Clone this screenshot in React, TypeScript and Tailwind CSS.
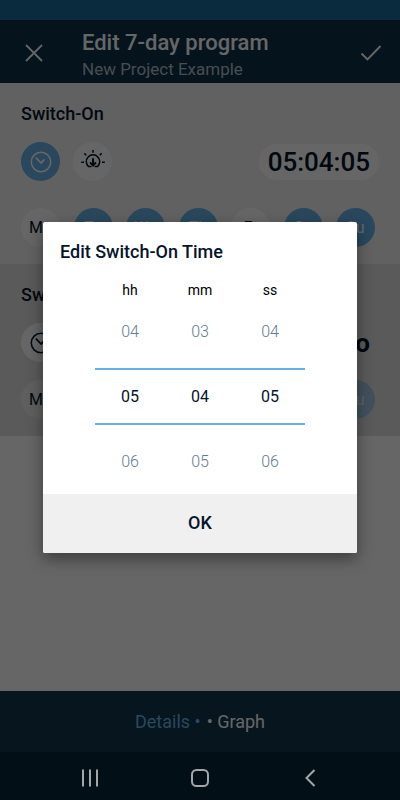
import { useState } from 'react'
import clsx from 'clsx'

const days = ['Mo', 'Tu', 'We', 'Th', 'Fr', 'Sa', 'Su']

const units = [
    { label: 'hh', name: 'Hours', max: 24 },
    { label: 'mm', name: 'Minutes', max: 60 },
    { label: 'ss', name: 'Seconds', max: 60 },
]

const pad = (value: number) => String(value).padStart(2, '0')

function ClockIcon() {
    return (
        <svg viewBox="0 0 22 22" className="size-[22px]" fill="none" stroke="currentColor" strokeWidth="1.5" strokeLinecap="round" strokeLinejoin="round">
            <circle cx="11" cy="11" r="9.7" />
            <path d="M6.4 7.2 11 12 14 8.9" strokeWidth="1.8" />
        </svg>
    )
}

function SunsetIcon() {
    return (
        <svg viewBox="0 0 24 24" className="size-6" fill="none" stroke="currentColor" strokeWidth="1.5">
            <path d="M10.4 16.6H7.6A6.7 6.7 0 1 1 16.4 16.6H13.6" />
            <path d="M12 8.2v7" strokeWidth="2" />
            <path d="m9 12.4 3 3.2 3-3.2" strokeWidth="1.8" />
            <path d="M12 0v2.8M.2 12.3h2.8M21 12.3h2.8M3.4 3.4l1.8 1.8M20.6 3.4l-1.8 1.8" />
        </svg>
    )
}

function ModeButtons({ active }: { active?: string }) {
    return (
        <div className="flex gap-[13px]">
            <button
                aria-label="Fixed time"
                className={clsx('flex size-[39px] items-center justify-center rounded-full', active === 'time' ? 'bg-[#66b5e8] text-white' : 'bg-white')}
            >
                <ClockIcon />
            </button>
            <button aria-label="Sunset" className="flex size-[39px] items-center justify-center rounded-full bg-white">
                <SunsetIcon />
            </button>
        </div>
    )
}

function DayRow({ selected, faded }: { selected: string[]; faded?: boolean }) {
    return (
        <div className="flex justify-between pr-1">
            {days.map((day) => (
                <button
                    key={day}
                    disabled={faded}
                    aria-pressed={selected.includes(day)}
                    className={clsx(
                        'size-[39px] rounded-full text-base',
                        selected.includes(day) ? 'bg-[#66b5e8] text-white' : faded ? 'bg-white/40' : 'bg-white',
                        faded && selected.includes(day) && 'opacity-50',
                    )}
                >
                    {day}
                </button>
            ))}
        </div>
    )
}

export default function App() {
    const [time, setTime] = useState([5, 4, 5])
    const [open, setOpen] = useState(true)
    const selectedDays = ['Tu', 'We', 'Th', 'Sa', 'Su']

    const setUnit = (index: number, value: number) => {
        const max = units[index].max
        setTime(time.map((v, i) => (i === index ? (value + max) % max : v)))
    }

    return (
        <div className="relative flex min-h-screen flex-col bg-white font-[Roboto,sans-serif] text-[#04142b]">
            <div className="h-5 bg-[#196998]" />

            <header className="flex h-[63px] items-center bg-[#0a3046] pt-0.5 pr-[18px] pl-[25px] text-white">
                <button aria-label="Close">
                    <svg viewBox="0 0 18 18" className="size-[18px]" fill="none" stroke="currentColor" strokeWidth="1.8">
                        <path d="m1 1 16 16M17 1 1 17" />
                    </svg>
                </button>
                <div className="ml-[39px] flex-1 pt-1">
                    <h1 className="text-[22px] leading-7 font-medium">Edit 7-day program</h1>
                    <p className="text-[17px] leading-6 text-white/70">New Project Example</p>
                </div>
                <button aria-label="Save">
                    <svg viewBox="0 0 22 18" className="h-[18px] w-[22px]" fill="none" stroke="currentColor" strokeWidth="1.9">
                        <path d="m1.5 9.5 6 6L20.5 2" />
                    </svg>
                </button>
            </header>

            <main className="flex-1">
                <section className="bg-[#f3f3f3] px-[21px] pt-[19px] pb-[17px]">
                    <h2 className="text-lg leading-6 font-medium">Switch-On</h2>
                    <div className="mt-4 mb-[27px] flex items-center justify-between">
                        <ModeButtons active="time" />
                        <button onClick={() => setOpen(true)} className="h-9 rounded-full bg-white px-[9px] text-[26px] leading-9 font-medium">
                            {time.map(pad).join(':')}
                        </button>
                    </div>
                    <DayRow selected={selectedDays} />
                </section>

                <section className="bg-[#e2e2e2] px-[21px] pt-[19px] pb-[17px]">
                    <h2 className="text-lg leading-6 font-medium">Switch-Off</h2>
                    <div className="mt-4 mb-[18px] flex items-center justify-between">
                        <ModeButtons />
                        <span className="pr-[9px] text-[26px] leading-9 font-bold">Auto</span>
                    </div>
                    <DayRow selected={selectedDays} faded />
                </section>
            </main>

            <footer className="flex h-[61px] items-center justify-center gap-1.5 bg-[#0f354b] text-lg text-white">
                <a href="#details" className="text-[#66b5e8]">Details •</a>
                <a href="#graph">• Graph</a>
            </footer>

            {/* Dimmed backdrop with the time picker */}
            {open && (
                <div className="absolute inset-0 flex items-center bg-black/60 px-[43px] pt-[22px] pb-12">
                    <div role="dialog" aria-labelledby="picker-title" className="flex-1 overflow-hidden rounded-xs bg-white shadow-[0_6px_16px_rgba(0,0,0,0.4)]">
                        <h2 id="picker-title" className="px-[17px] pt-[18px] text-lg leading-6 font-medium">
                            Edit Switch-On Time
                        </h2>
                        <div className="px-[52px] pt-4 pb-5 text-base">
                            <div className="grid grid-cols-3 text-center text-sm leading-5 text-black">
                                {units.map((unit) => (
                                    <label key={unit.label} htmlFor={unit.label}>{unit.label}</label>
                                ))}
                            </div>
                            <div className="mt-5 grid grid-cols-3 font-light text-[#5f7d90]">
                                {time.map((value, i) => (
                                    <button key={i} aria-label={`${units[i].name} down`} onClick={() => setUnit(i, value - 1)}>
                                        {pad((value - 1 + units[i].max) % units[i].max)}
                                    </button>
                                ))}
                            </div>
                            <div className="mt-6 grid h-[57px] grid-cols-3 border-y-2 border-[#62b2e6]">
                                {time.map((value, i) => (
                                    <input
                                        key={i}
                                        id={units[i].label}
                                        inputMode="numeric"
                                        value={pad(value)}
                                        onChange={(e) => setUnit(i, Number(e.target.value) || 0)}
                                        className="w-full pt-0.5 text-center outline-none"
                                    />
                                ))}
                            </div>
                            <div className="mt-[25px] grid grid-cols-3 font-light text-[#5f7d90]">
                                {time.map((value, i) => (
                                    <button key={i} aria-label={`${units[i].name} up`} onClick={() => setUnit(i, value + 1)}>
                                        {pad((value + 1) % units[i].max)}
                                    </button>
                                ))}
                            </div>
                        </div>
                        <button onClick={() => setOpen(false)} className="h-[59px] w-full bg-[#f0f0f0] text-lg font-medium">
                            OK
                        </button>
                    </div>
                </div>
            )}

            {/* System navigation stays above the backdrop */}
            <nav className="relative flex h-12 items-center justify-center gap-[92px] bg-[#020f17] pt-1 text-[#a3a6a8]">
                <button aria-label="Recent apps">
                    <svg viewBox="0 0 18 18" className="size-[18px]" stroke="currentColor" strokeWidth="2">
                        <path d="M2 .5v17M9 .5v17M16 .5v17" />
                    </svg>
                </button>
                <button aria-label="Home">
                    <svg viewBox="0 0 18 18" className="size-[18px]" fill="none" stroke="currentColor" strokeWidth="2">
                        <rect x="1" y="1" width="16" height="16" rx="4.5" />
                    </svg>
                </button>
                <button aria-label="Back">
                    <svg viewBox="0 0 18 18" className="size-[18px]" fill="none" stroke="currentColor" strokeWidth="2">
                        <path d="M13.5 1 5.5 9l8 8" />
                    </svg>
                </button>
            </nav>
        </div>
    )
}
